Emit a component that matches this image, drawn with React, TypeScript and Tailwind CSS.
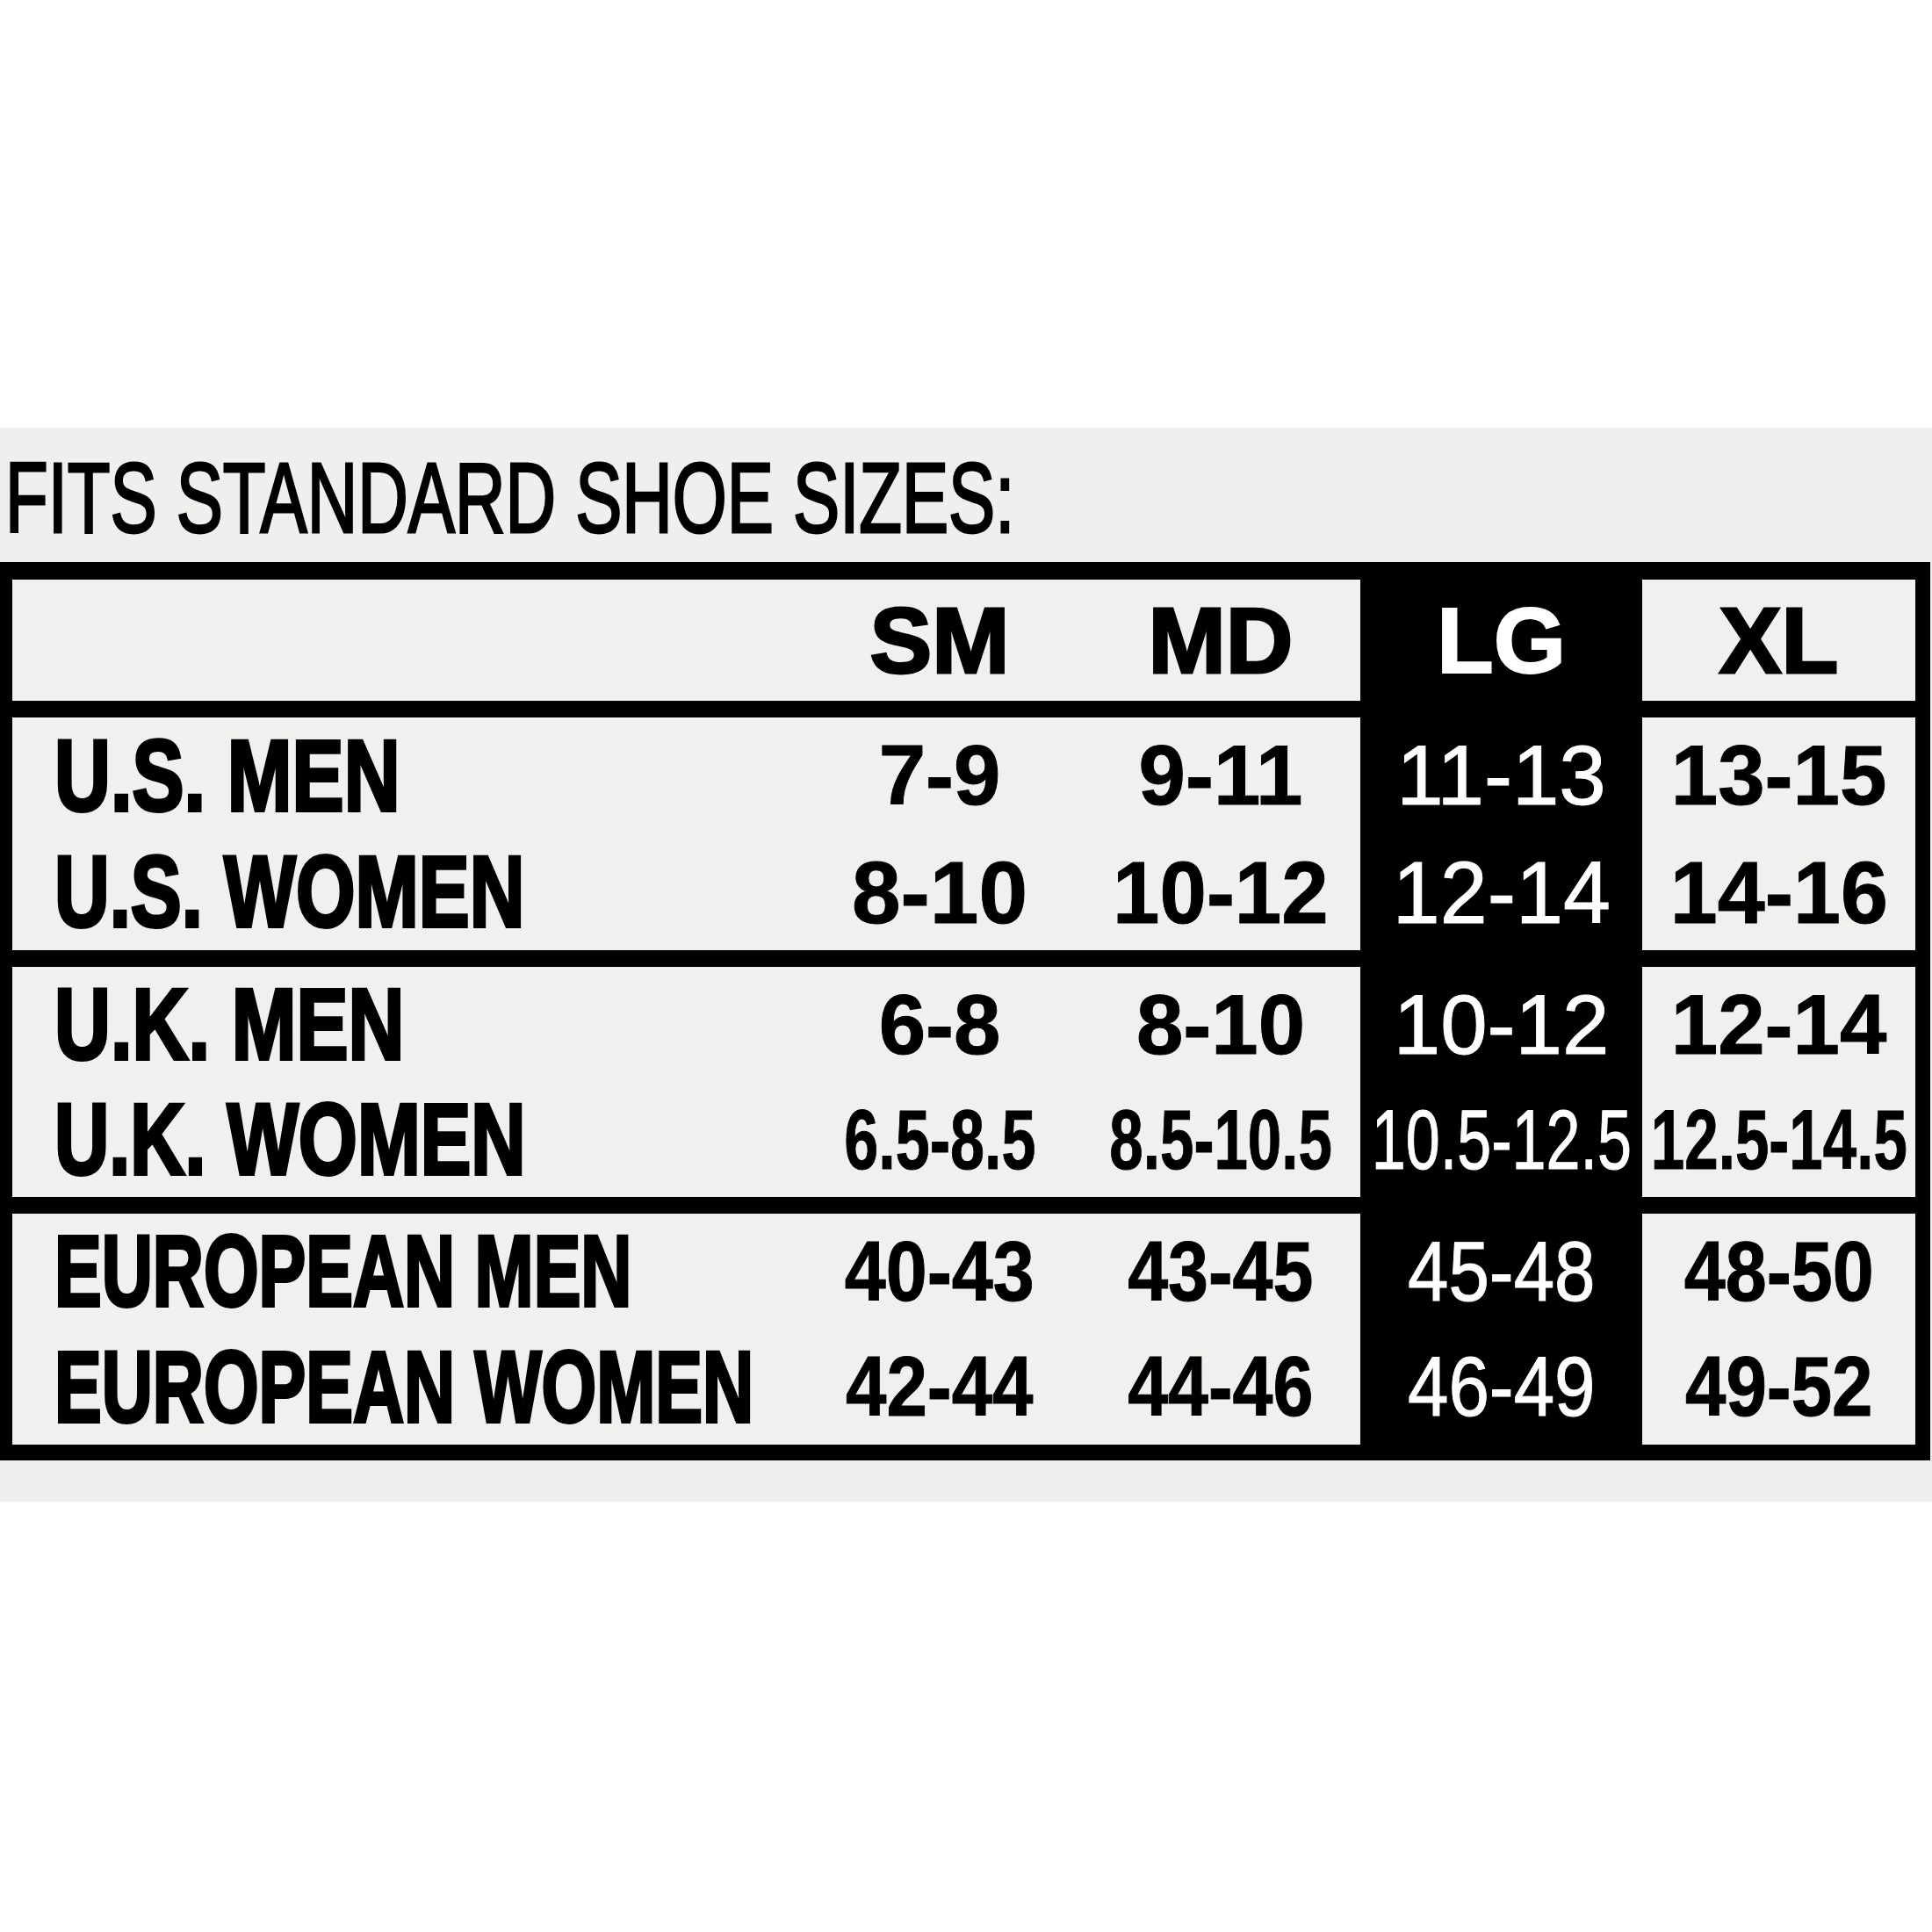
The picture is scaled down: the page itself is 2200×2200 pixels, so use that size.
import React from "react";

type Cell = { t: string; s: number; fs: number };

const sections: { labels: { t: string; s: number }[]; rows: Cell[][] }[] = [
  {
    labels: [
      { t: "U.S. MEN", s: 0.77 },
      { t: "U.S. WOMEN", s: 0.755 },
    ],
    rows: [
      [
        { t: "7-9", s: 1, fs: 96 },
        { t: "9-11", s: 1, fs: 96 },
        { t: "11-13", s: 1, fs: 96 },
        { t: "13-15", s: 1, fs: 96 },
      ],
      [
        { t: "8-10", s: 1, fs: 100 },
        { t: "10-12", s: 0.96, fs: 100 },
        { t: "12-14", s: 0.97, fs: 100 },
        { t: "14-16", s: 0.97, fs: 100 },
      ],
    ],
  },
  {
    labels: [
      { t: "U.K. MEN", s: 0.77 },
      { t: "U.K. WOMEN", s: 0.75 },
    ],
    rows: [
      [
        { t: "6-8", s: 1, fs: 96 },
        { t: "8-10", s: 1, fs: 96 },
        { t: "10-12", s: 1, fs: 96 },
        { t: "12-14", s: 1, fs: 96 },
      ],
      [
        { t: "6.5-8.5", s: 0.73, fs: 96 },
        { t: "8.5-10.5", s: 0.72, fs: 96 },
        { t: "10.5-12.5", s: 0.73, fs: 96 },
        { t: "12.5-14.5", s: 0.72, fs: 96 },
      ],
    ],
  },
  {
    labels: [
      { t: "EUROPEAN MEN", s: 0.7 },
      { t: "EUROPEAN WOMEN", s: 0.7 },
    ],
    rows: [
      [
        { t: "40-43", s: 0.88, fs: 96 },
        { t: "43-45", s: 0.86, fs: 96 },
        { t: "45-48", s: 0.87, fs: 96 },
        { t: "48-50", s: 0.88, fs: 96 },
      ],
      [
        { t: "42-44", s: 0.87, fs: 96 },
        { t: "44-46", s: 0.86, fs: 96 },
        { t: "46-49", s: 0.87, fs: 96 },
        { t: "49-52", s: 0.87, fs: 96 },
      ],
    ],
  },
];

function Num({ c, white }: { c: Cell; white?: boolean }) {
  return (
    <span
      className={`inline-block whitespace-nowrap leading-none ${
        white
          ? "font-normal text-white [-webkit-text-stroke:1px_white]"
          : "font-bold text-black [-webkit-text-stroke:1px_black]"
      }`}
      style={{ fontSize: c.fs, transform: `scaleX(${c.s})` }}
    >
      {c.t}
    </span>
  );
}

export default function App() {
  return (
    <div
      className="w-[2200px] h-[2200px] bg-white text-black"
      style={{ fontFamily: '"Liberation Sans", Arial, sans-serif' }}
    >
      <div className="h-[487px]" />
      <div className="bg-[#efefed] pt-[24px] pb-[47px]">
        <div className="h-[113px] pl-[6px] leading-none">
          <span className="inline-block origin-left whitespace-nowrap text-[113px] leading-none scale-x-[0.705] [-webkit-text-stroke:3px_black]">
            FITS STANDARD SHOE SIZES:
          </span>
        </div>
        <div className="mt-[16px] w-[2198px] bg-black pl-[14px] pr-[17px] pt-[20px] pb-[18px]">
          <div className="grid grid-cols-[1535px_321px_311px] grid-rows-[138px_265px_262px_263px] gap-y-[19px]">
            {/* header */}
            <div className="bg-[#f0f0ee] grid grid-cols-[895px_322px_318px] items-center">
              <div />
              <div className="flex justify-center">
                <span className="text-[106px] font-bold leading-none [-webkit-text-stroke:3px_black]">SM</span>
              </div>
              <div className="flex justify-center">
                <span className="text-[106px] font-bold leading-none [-webkit-text-stroke:3px_black]">MD</span>
              </div>
            </div>
            <div className="flex items-center justify-center">
              <span className="text-[106px] font-bold leading-none text-white [-webkit-text-stroke:2px_white]">LG</span>
            </div>
            <div className="bg-[#f0f0ee] flex items-center justify-center">
              <span className="text-[106px] font-bold leading-none [-webkit-text-stroke:3px_black]">XL</span>
            </div>

            {sections.map((sec, si) => (
              <React.Fragment key={si}>
                <div className="bg-[#f0f0ee] flex flex-col">
                  {sec.rows.map((r, ri) => (
                    <div key={ri} className="flex-1 grid grid-cols-[895px_322px_318px] items-center">
                      <div className="min-w-0 pl-[48px] whitespace-nowrap">
                        <span
                          className="inline-block origin-left whitespace-nowrap font-bold text-[115px] leading-none [-webkit-text-stroke:4px_black]"
                          style={{ transform: `scaleX(${sec.labels[ri].s})` }}
                        >
                          {sec.labels[ri].t}
                        </span>
                      </div>
                      <div className="flex justify-center">
                        <Num c={r[0]} />
                      </div>
                      <div className="flex justify-center">
                        <Num c={r[1]} />
                      </div>
                    </div>
                  ))}
                </div>
                <div className="flex flex-col">
                  {sec.rows.map((r, ri) => (
                    <div key={ri} className="flex-1 flex items-center justify-center">
                      <Num c={r[2]} white />
                    </div>
                  ))}
                </div>
                <div className="bg-[#f0f0ee] flex flex-col">
                  {sec.rows.map((r, ri) => (
                    <div key={ri} className="flex-1 flex items-center justify-center">
                      <Num c={r[3]} />
                    </div>
                  ))}
                </div>
              </React.Fragment>
            ))}
          </div>
        </div>
      </div>
    </div>
  );
}
